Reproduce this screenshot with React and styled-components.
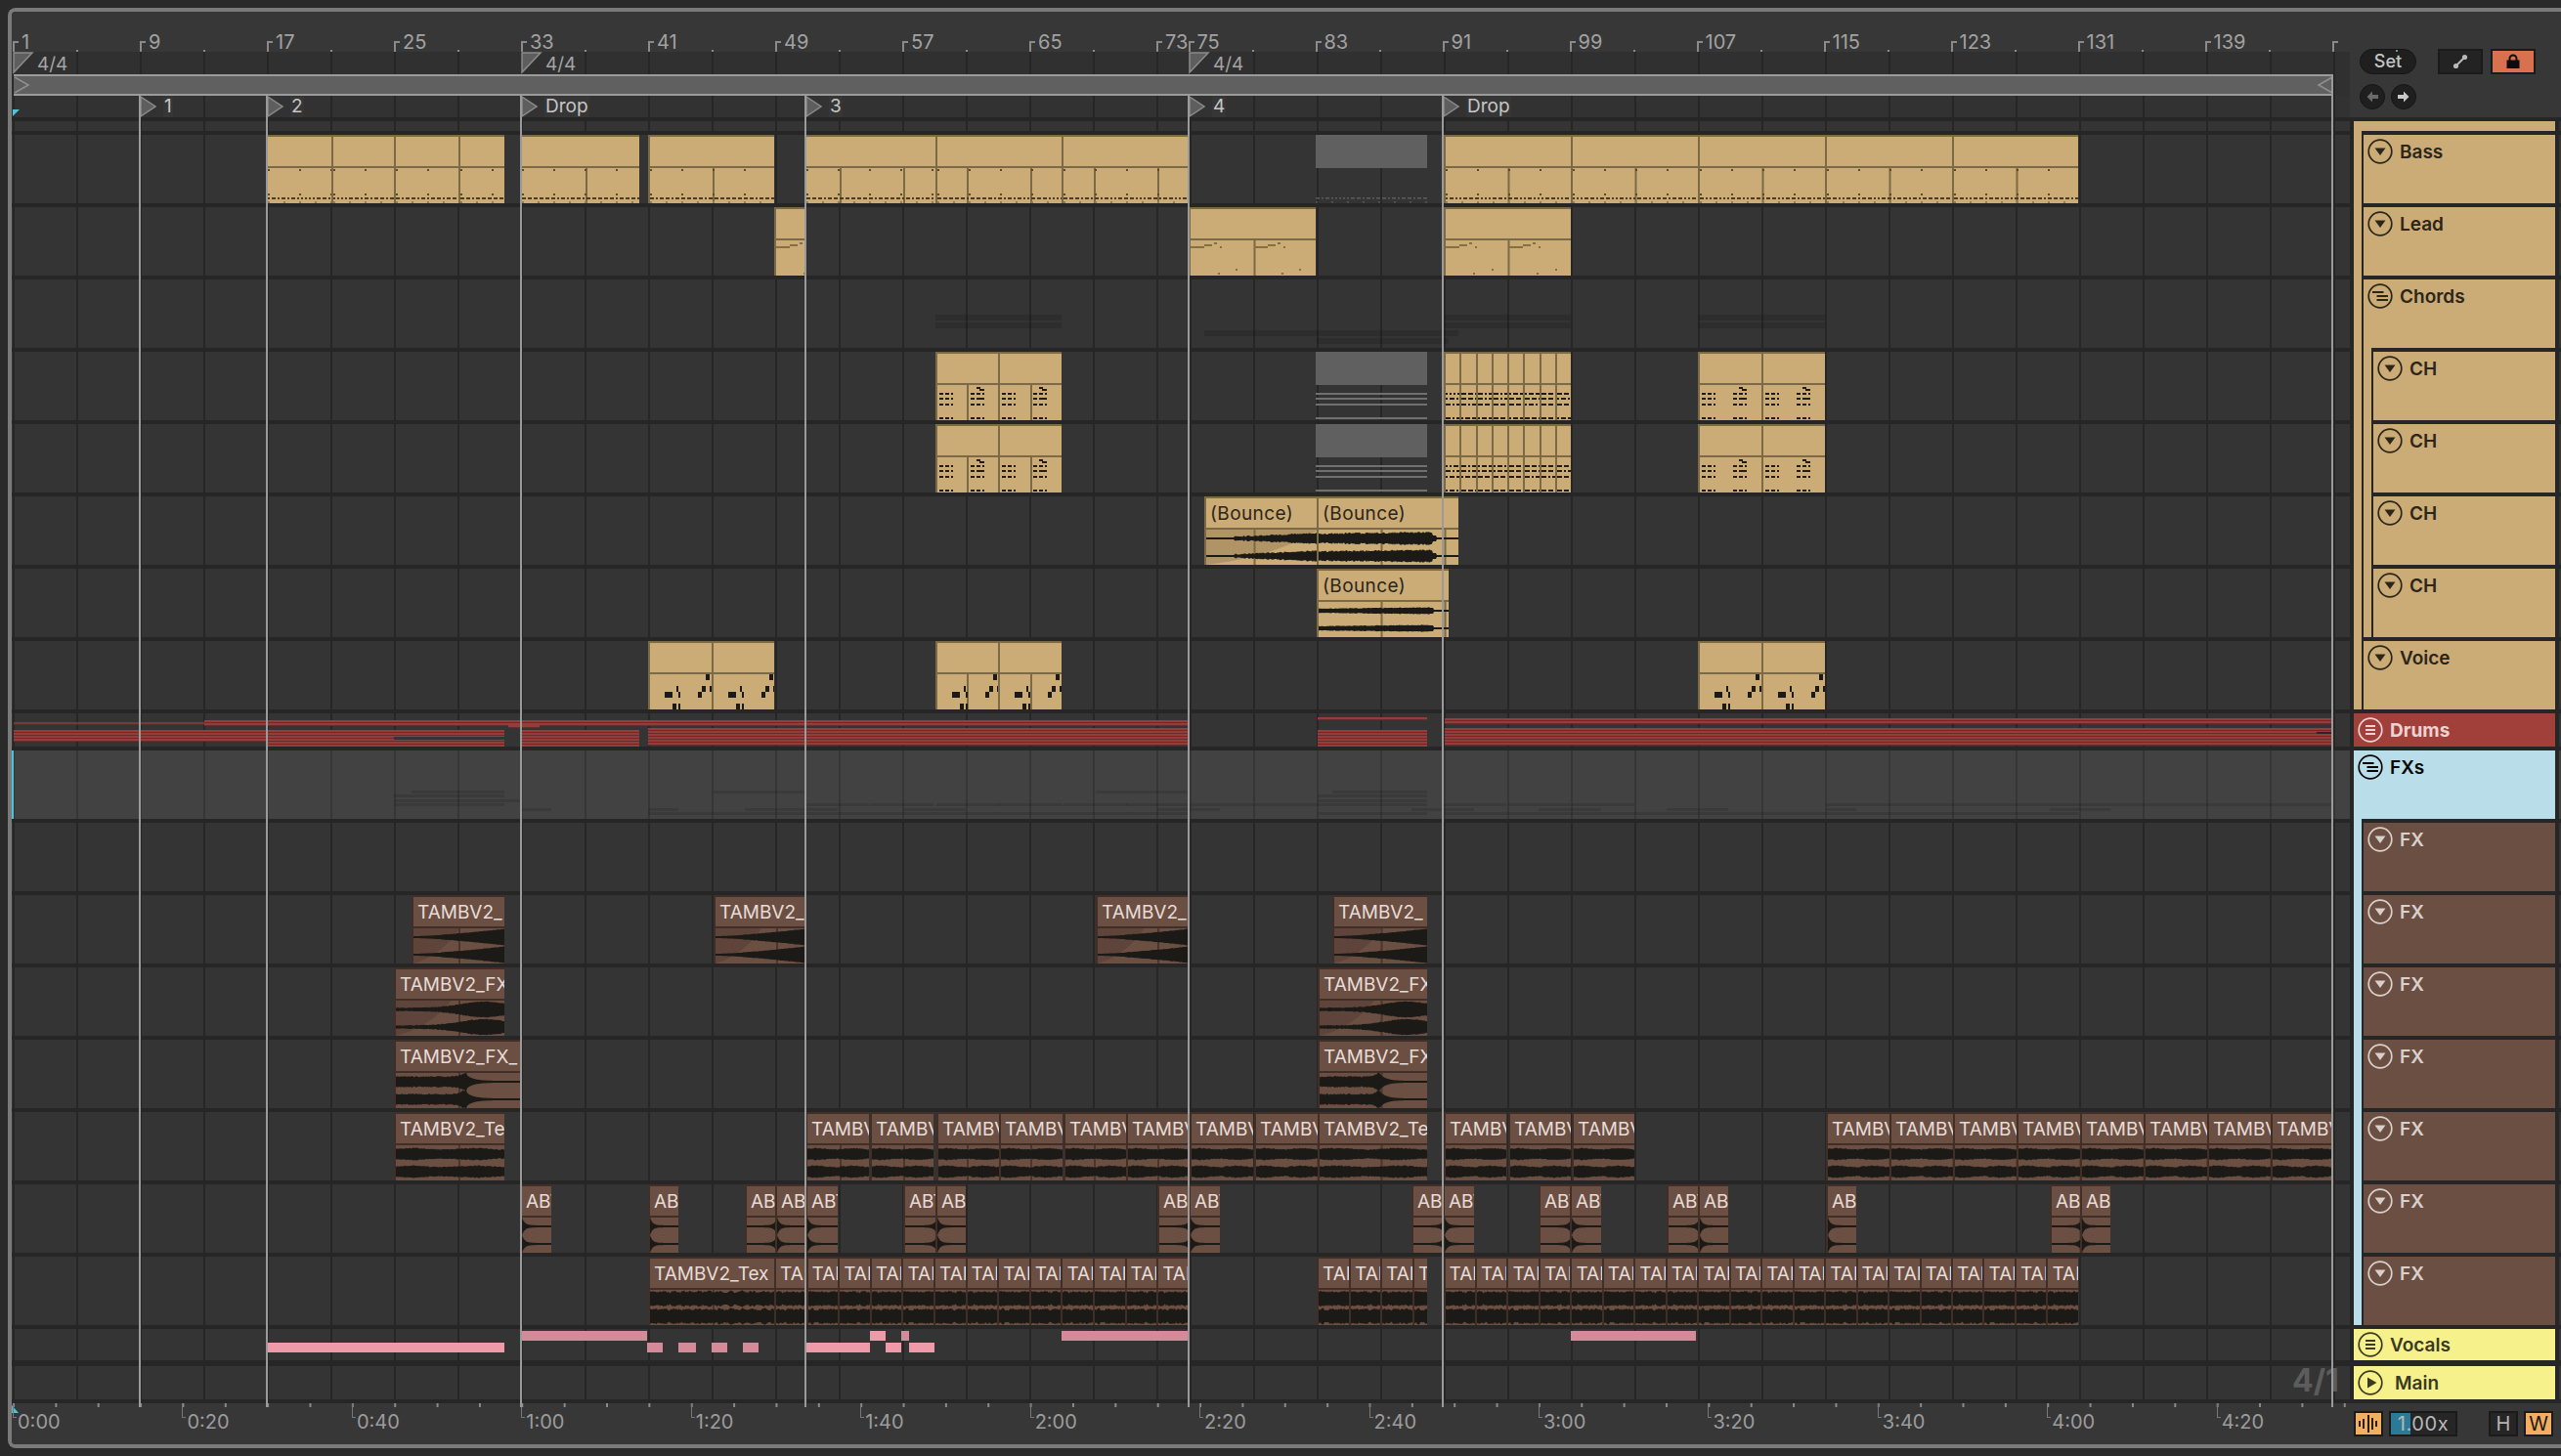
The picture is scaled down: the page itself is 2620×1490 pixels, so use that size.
import React from "react";
import styled, { createGlobalStyle, css } from "styled-components";

const FONT = `"Inter", "Liberation Sans", sans-serif`;
const TAN = "#cbab76";
const BROWN = "#6c4f43";
const BLUE = "#b9dde9";
const DARK = "#262626";
const LANE_LEFT = 12;

const GlobalStyle = createGlobalStyle`
  html, body { margin: 0; background: #2a2a2a; overflow: hidden; }
  * { box-sizing: border-box; }
`;

const grid = css`
  position: relative;
  &::before, &::after {
    content: "";
    position: absolute;
    top: 0;
    bottom: 0;
    pointer-events: none;
    background-image: linear-gradient(90deg, ${(p) => p.$line || DARK} 2px, transparent 2px);
    background-size: 65px 100%;
    background-repeat: repeat-x;
  }
  &::before { left: 0; width: 1204.5px; background-position: 1px 0; }
  &::after { left: 1204.5px; right: 0; background-position: 0 0; }
`;

const Page = styled.div`
  width: 2620px;
  height: 1490px;
  padding: 8px 0 0 8px;
  font-family: ${FONT};
`;
const Frame = styled.div`
  position: relative;
  width: 2612px;
  height: 1474px;
  border: 4px solid #7a7a7a;
  border-right: 0;
  border-radius: 8px 0 0 8px;
  background: ${DARK};
  overflow: hidden;
`;
const TopRow = styled.div`
  display: flex;
  height: 108px;
  background: #373737;
`;
const Head = styled.div`
  width: 2392px;
  display: flex;
  flex-direction: column;
`;
const BeatRuler = styled.div`
  display: flex;
  height: 41px;
  padding-left: 1px;
`;
const BeatCell = styled.div`
  position: relative;
  flex: none;
  width: ${(p) => p.$w}px;
  padding: 21px 0 0 9px;
  font-size: 20px;
  line-height: 20px;
  color: #a2a2a2;
  &::before {
    content: "";
    position: absolute;
    left: 0;
    top: 30px;
    width: 4px;
    height: 11px;
    border-left: 2px solid #8a8a8a;
    border-top: 2px solid #8a8a8a;
  }
  &::after {
    content: "";
    display: ${(p) => (p.$short ? "none" : "block")};
    position: absolute;
    left: 50%;
    bottom: 0;
    width: 2px;
    height: 2px;
    background: #8a8a8a;
  }
`;
const SigStrip = styled.div`
  ${grid}
  height: 23px;
  background: #303030;
`;
const SigMark = styled.div`
  position: absolute;
  top: 0;
  display: flex;
  z-index: 1;
  font-size: 19px;
  line-height: 21px;
  color: #a4a4a4;
  gap: 3px;
  svg { display: block; }
  span { padding-top: 2px; }
`;
const LoopRow = styled.div`
  ${grid}
  height: 22px;
  background: #303030;
  padding-left: 2px;
`;
const LoopBar = styled.div`
  position: relative;
  z-index: 1;
  width: 2373px;
  height: 22px;
  background: #606060;
  border-top: 2px solid #9b9b9b;
  border-bottom: 2px solid #9b9b9b;
  display: flex;
  justify-content: space-between;
  align-items: center;
`;
const FlagStrip = styled.div`
  ${grid}
  height: 22px;
  background: #323232;
`;
const Flag = styled.div`
  position: absolute;
  top: 0;
  z-index: 1;
  display: flex;
  gap: 6px;
  font-size: 19px;
  line-height: 22px;
  color: #c6c6c6;
  svg { display: block; }
  span { padding: 0 1px; background: #363636; }
`;
const PlayStart = styled.div`
  position: absolute;
  left: 1px;
  top: 14px;
  width: 7px;
  height: 7px;
  z-index: 2;
  background: #4fc3da;
  clip-path: polygon(0 0, 100% 0, 0 100%);
`;
const Controls = styled.div`
  flex: 1;
  padding: 38px 0 0 10px;
`;
const ControlRow = styled.div`
  display: flex;
  margin-bottom: 10px;
`;
const SetButton = styled.div`
  width: 58px;
  height: 26px;
  margin-right: 22px;
  border-radius: 13px;
  background: #1f1f1f;
  border: 1px solid #151515;
  color: #c4c4c4;
  font-size: 18px;
  font-weight: 500;
  line-height: 24px;
  text-align: center;
`;
const SquareToggle = styled.div`
  display: flex;
  align-items: center;
  justify-content: center;
  width: 46px;
  height: 26px;
  margin-right: 8px;
  border: 2px solid #1a1a1a;
  background: ${(p) => p.$bg || "#232323"};
`;
const RoundButton = styled.div`
  display: flex;
  align-items: center;
  justify-content: center;
  width: 26px;
  height: 26px;
  margin-right: 6px;
  border-radius: 50%;
  background: #1f1f1f;
  border: 1px solid #151515;
  color: ${(p) => p.$c};
`;
const Tracks = styled.div`
  padding-top: 4px;
`;
const Row = styled.div`
  display: flex;
  height: ${(p) => p.$h + p.$sep}px;
`;
const Lane = styled.div`
  ${grid}
  flex: none;
  width: 2392px;
  height: ${(p) => p.$h}px;
  background: ${(p) => p.$bg || "#343434"};
`;
const Tail = styled.div`
  width: 2px;
  margin-left: 4px;
  height: ${(p) => p.$h}px;
  background: ${(p) => p.$bg || "#343434"};
`;
const HeadCell = styled.div`
  flex: none;
  width: 206px;
  margin-left: 4px;
  display: flex;
`;
const Strip = styled.div`
  flex: none;
  width: 8px;
  background: ${(p) => p.$c};
  margin-bottom: ${(p) => (p.$end ? p.$sep : 0)}px;
`;
const StripLine = styled.div`
  flex: none;
  width: 2px;
  background: ${DARK};
`;
const HeadBody = styled.div`
  flex: 1;
  display: flex;
  flex-direction: column;
  background: ${(p) => p.$c};
`;
const HeadTitle = styled.div`
  flex: 1;
  display: flex;
  align-items: ${(p) => (p.$slim ? "center" : "flex-start")};
  gap: ${(p) => p.$gap || 7}px;
  padding: ${(p) => (p.$slim ? 0 : 4)}px 0 0 4px;
  font-size: 19px;
  font-weight: ${(p) => p.$weight || 600};
  line-height: 26px;
  color: ${(p) => p.$ink};
  svg { display: block; flex: none; }
`;
const HeadLabel = styled.span`
  padding-top: 1px;
`;
const HeadSep = styled.div`
  height: ${(p) => p.$sep}px;
  margin-left: ${(p) => p.$inset || 0}px;
  background: ${DARK};
`;
const ClipBox = styled.div`
  position: absolute;
  top: 0;
  height: 100%;
  z-index: 1;
  overflow: hidden;
  display: flex;
  flex-direction: column;
`;
const tones = {
  tan: { bg: TAN, edge: "#7b6a45", ink: "#2c2619" },
  brown: { bg: BROWN, edge: "#402e27", ink: "#e6dcd6" },
};
const ClipTitle = styled.div`
  flex: none;
  height: 34px;
  padding-left: 4px;
  white-space: nowrap;
  overflow: hidden;
  font-size: 19px;
  line-height: 31px;
  letter-spacing: ${(p) => (p.$tone === "tan" ? "0.4px" : "0")};
  background: ${(p) => (p.$ghost ? "#606060" : tones[p.$tone].bg)};
  color: ${(p) => tones[p.$tone].ink};
  ${(p) =>
    !p.$ghost &&
    css`
      border-top: 2px solid ${tones[p.$tone].edge};
      border-left: 2px solid ${tones[p.$tone].edge};
      border-bottom: 2px solid ${tones[p.$tone].edge};
    `}
`;
const ClipBody = styled.div`
  flex: 1;
  background: ${(p) => (p.$ghost ? "transparent" : tones[p.$tone].bg)};
  ${(p) => !p.$ghost && css`border-left: 2px solid ${tones[p.$tone].edge};`}
  svg { display: block; }
`;
const GhostLine = styled.div`
  position: absolute;
  z-index: 1;
  height: ${(p) => p.$h}px;
  background: rgba(0, 0, 0, ${(p) => p.$a});
`;
const VocalNote = styled.div`
  position: absolute;
  z-index: 1;
  height: 10px;
  top: ${(p) => (p.$high ? 2 : 14)}px;
  background: ${(p) => (p.$dim ? "#d58a99" : "#ef9aa9")};
`;
const DrumArt = styled.svg`
  position: absolute;
  left: 0;
  top: 0;
  z-index: 1;
`;
const SelectionEdge = styled.div`
  position: absolute;
  left: 0;
  top: 0;
  width: 2px;
  height: 100%;
  z-index: 2;
  background: #4fc3da;
`;
const LocatorLine = styled.div`
  position: absolute;
  top: ${(p) => (p.$end ? 64 : 86)}px;
  bottom: 38px;
  width: 2px;
  z-index: 3;
  background: #9a9a9a;
`;
const GridLabel = styled.div`
  position: absolute;
  left: 2333px;
  top: 1383px;
  z-index: 2;
  font-size: 32px;
  font-weight: 700;
  line-height: 36px;
  color: #5c5c5c;
`;
const BottomRow = styled.div`
  display: flex;
  height: 42px;
  background: #373737;
`;
const TimeRuler = styled.div`
  position: relative;
  flex: none;
  width: 2392px;
  display: flex;
  padding-left: 1px;
  overflow: hidden;
  background-image: linear-gradient(90deg, #8a8a8a 2px, transparent 2px);
  background-size: 43.37px 4px;
  background-repeat: repeat-x;
  background-position: 1px 0;
`;
const TimeCell = styled.div`
  position: relative;
  flex: none;
  width: 173.45px;
  padding: 6px 0 0 5px;
  font-size: 20px;
  line-height: 26px;
  color: #9c9c9c;
  &::before {
    content: "";
    position: absolute;
    left: 0;
    top: 0;
    width: 3px;
    height: 14px;
    border-left: 1.5px solid #777;
    border-bottom: 1.5px solid #777;
  }
`;
const TimeStart = styled.div`
  position: absolute;
  left: 0;
  top: 2px;
  width: 7px;
  height: 8px;
  background: #4fc3da;
  clip-path: polygon(0 0, 100% 100%, 0 100%);
`;
const BottomTools = styled.div`
  flex: 1;
  display: flex;
  padding: 8px 0 0 4px;
`;
const ToolButton = styled.div`
  display: flex;
  align-items: center;
  justify-content: center;
  flex: none;
  width: ${(p) => p.$w || 30}px;
  height: 26px;
  margin-right: ${(p) => p.$mr || 0}px;
  border: 2px solid #1a1a1a;
  background: ${(p) => p.$bg || "#262626"};
  color: ${(p) => p.$ink || "#b4b4b4"};
  font-size: 20px;
  line-height: 22px;
`;
const ZoomBox = styled.div`
  position: relative;
  width: 70px;
  height: 26px;
  margin-right: 32px;
  border: 2px solid #1a1a1a;
  background: #262626;
  color: #b8b8b8;
  font-size: 20px;
  line-height: 22px;
  letter-spacing: 0.6px;
  text-align: center;
  span { position: relative; }
`;
const ZoomFill = styled.div`
  position: absolute;
  left: 0;
  top: 0;
  bottom: 0;
  width: 20px;
  background: #2c7a96;
`;

// small seeded noise so the wave forms stay the same on every load
const noise = (n) => {
  const v = Math.sin(n * 127.1 + 311.7) * 43758.5453;
  return v - Math.floor(v);
};

const wavePath = (w, amp, seed) => {
  let d = "";
  [9, 27].forEach((cy, ch) => {
    const top = [];
    const bottom = [];
    for (let x = 0; x <= w; x += 1) {
      const a = amp(x / w, x, noise(x * 0.37 + seed + ch * 9));
      top.push(`${x},${(cy - a).toFixed(1)}`);
      bottom.unshift(`${x},${(cy + a).toFixed(1)}`);
    }
    d += `M${top.join(" L")} L${bottom.join(" L")} Z `;
  });
  return d;
};

const envelopes = {
  rise: (t, x, n) => 1 + Math.pow(t, 1.5) * 7.5 + (t > 0.3 ? n * 0.5 : 0),
  swell: (t, x, n) => 1.2 + Math.exp(-Math.pow((t - 0.8) / 0.3, 2)) * 6.4 + n * 0.9,
  fall: (t, x, n) =>
    t < 0.56
      ? 4.6 + Math.exp(-Math.pow((t - 0.55) / 0.05, 2)) * 3.5 + n * 1.4
      : 1 + 6 * Math.exp(-(t - 0.56) * 18),
  tex: (t, x, n) => 4.8 + Math.sin(t * 11) * 0.7 + n * 1.1,
  abFall: (t) => 1.1 + 8 * Math.exp(-t * 12),
  abRise: (t) => 1.1 + 8 * Math.exp(-(1 - t) * 12),
  dense: (t, x, n) => 6 + Math.sin(x * 0.55) * 0.6 + n * 2.2,
  bounceIn: (t, x, n) => (t < 0.25 ? 1 : 1 + (t - 0.25) * 5 + n * 1.4),
  bounceLoud: (t, x, n) => (t > 0.8 ? (t > 0.83 ? 1 : 3) : 3.8 + t * 2 + n * 1.8),
  bounceSoft: (t, x, n) => (t > 0.84 ? (t > 0.87 ? 1 : 3) : 1.8 + t * 1.5 + n * 0.7),
};

const gridXs = (x, w) => {
  const xs = [];
  for (let k = 0; k < 40; k += 1) {
    const gx = k < 19 ? 13 + 65 * k : 1216.5 + 65 * (k - 19);
    if (gx > x + 3 && gx < x + w - 1) xs.push(gx - x);
  }
  return xs;
};

const dashes = (w, y, h, seed, fill, on = 5, off = 2) => {
  const out = [];
  let x = 0;
  let i = 0;
  while (x < w) {
    const len = noise(seed + i) > 0.7 ? 2 : on;
    out.push(<rect key={`${y}-${i}`} x={x} y={y} width={len} height={h} fill={fill} />);
    x += len + off;
    i += 1;
  }
  return out;
};

const bassNotes = (w, seed) => [
  ...dashes(w, 30, 2, seed, "#4a3d22", 4, 2),
  ...dashes(w, 34, 2, seed + 5, "#8f7b50", 2, 14),
  ...dashes(w, 1, 2, seed + 9, "#5a4b2c", 2, 30),
  ...dashes(w, 26, 2, seed + 13, "#5a4b2c", 2, 30),
];
const leadNotes = (w, seed) => {
  const out = [];
  for (let x = 0; x < w; x += 65) {
    out.push(
      <rect key={`a${x}`} x={x} y={6} width={14} height={2} fill="#85703f" />,
      <rect key={`b${x}`} x={x + 14} y={4} width={8} height={2} fill="#85703f" />,
      <rect key={`c${x}`} x={x + 24} y={2} width={3} height={2} fill="#85703f" />,
      <rect key={`d${x}`} x={x + 30} y={6} width={2} height={2} fill="#85703f" />,
      <rect key={`e${x}`} x={x + 28} y={33} width={2} height={2} fill="#85703f" />,
      <rect key={`f${x}`} x={x + 45 + (seed % 5)} y={29} width={2} height={2} fill="#85703f" />,
    );
  }
  return out;
};
const NOTE = "#201c14";
const chordNotes = (w) => {
  const out = [];
  for (let x = 0; x < w; x += 32) {
    const full = Math.floor(x / 32) % 2 === 1;
    [8, 13, 19, 33].forEach((y) => {
      [[2, 4], [8, 4], [14, 2]].forEach(([dx, len], i) => {
        out.push(<rect key={`${x}-${y}-${i}`} x={x + dx} y={y} width={len} height={2} fill={NOTE} />);
      });
    });
    if (full) {
      out.push(
        <rect key={`t${x}`} x={x + 8} y={2} width={4} height={2} fill={NOTE} />,
        <rect key={`u${x}`} x={x + 11} y={4} width={5} height={2} fill={NOTE} />,
        <rect key={`v${x}`} x={x + 8} y={13} width={8} height={2} fill={NOTE} />,
      );
    }
  }
  return out;
};
const denseChordNotes = (w, seed) =>
  [8, 13, 19, 33].flatMap((y) => dashes(w, y, 2, seed + y, NOTE, 5, 2));
const voiceNotes = (w) => {
  const blocks = [
    [15, 18, 8, 6], [27, 12, 2, 6], [29, 18, 2, 6], [23, 30, 4, 6], [29, 30, 2, 6],
    [49, 18, 4, 6], [53, 12, 4, 6], [57, 0, 4, 6], [61, 12, 4, 6],
  ];
  const out = [];
  for (let x = 0; x < w; x += 65) {
    blocks.forEach(([bx, y, bw, h], i) => {
      out.push(<rect key={`${x}-${i}`} x={x + bx} y={y} width={bw} height={h} fill="#1c1a17" />);
    });
  }
  return out;
};
const ghostChord = (w) =>
  [8, 13, 19, 33].map((y) => <rect key={y} x={0} y={y} width={w} height={2} fill="#707070" />);

const ClipArt = ({ x, w, tone, ghost, wave, seed = 1, fade, notes }) => {
  const gridFill = ghost ? "transparent" : tone === "tan" ? "#7b6a45" : "#4a362e";
  return (
    <svg width={w} height={36} viewBox={`0 0 ${w} 36`}>
      {fade && (
        <path
          d={`M0,0 H${w * fade} Q${w * fade * 0.6},28 0,36 Z`}
          fill="rgba(0,0,0,0.13)"
        />
      )}
      {gridXs(x, w).map((g) => (
        <rect key={g} x={g - 1} y={0} width={2} height={36} fill={gridFill} />
      ))}
      {notes}
      {wave && <path d={wavePath(w, envelopes[wave], seed)} fill="#1c1a17" />}
    </svg>
  );
};

const Clip = ({ x, w, tone = "tan", title, ghost, ...art }) => (
  <ClipBox style={{ left: x - LANE_LEFT, width: w }}>
    <ClipTitle $tone={tone} $ghost={ghost}>
      {/* only what fits in the clip's width, the rest is cut by the clip */}
      {title && title.slice(0, Math.ceil((w - 6) / 12.5))}
    </ClipTitle>
    <ClipBody $tone={tone} $ghost={ghost}>
      <ClipArt x={x} w={w} tone={tone} ghost={ghost} {...art} />
    </ClipBody>
  </ClipBox>
);

const PanelIcon = ({ kind, color }) => (
  <svg width="26" height="26" viewBox="0 0 26 26">
    <circle cx="13" cy="13" r="11.8" fill="none" stroke={color} strokeWidth="1.7" />
    {kind === "down" && <polygon points="7.5,9.5 18.5,9.5 13,17" fill={color} />}
    {kind === "menu" && <path d="M8 9H18M8 13H18M8 17H18" stroke={color} strokeWidth="2" />}
    {kind === "stagger" && <path d="M5 9H16.5M9.5 13H21M9.5 17H21" stroke={color} strokeWidth="2" />}
    {kind === "play" && <polygon points="10,7.5 19.5,13 10,18.5" fill={color} />}
  </svg>
);

const TrackHead = ({ title, icon, c, ink, strips = [], sep = 4, inset, slim, gap, weight }) => (
  <HeadCell>
    {strips.map((s, i) => (
      <React.Fragment key={i}>
        <Strip $c={s.c} $end={s.end} $sep={sep} />
        <StripLine />
      </React.Fragment>
    ))}
    <HeadBody $c={c}>
      <HeadTitle $slim={slim} $ink={ink} $gap={gap} $weight={weight}>
        {icon && <PanelIcon kind={icon} color={ink} />}
        {title && <HeadLabel>{title}</HeadLabel>}
      </HeadTitle>
      <HeadSep $sep={sep} $inset={inset} />
    </HeadBody>
  </HeadCell>
);

const Track = ({ h = 70, sep = 4, bg, line, head, children }) => (
  <Row $h={h} $sep={sep}>
    <Lane $h={h} $bg={bg} $line={line}>
      {children}
    </Lane>
    {head}
    <Tail $h={h} $bg={bg} />
  </Row>
);

const span = (x, w) => ({ x, w });
const bassClips = [
  span(272, 67), span(339, 64), span(403, 66), span(469, 47), span(532, 122), span(663, 129),
  span(823, 134), span(957, 129), span(1086, 130.5), span(1477, 130), span(1607, 130),
  span(1737, 130), span(1867, 130), span(1997, 129),
];
const chordPairs = [span(957, 64), span(1021, 65), span(1737, 65), span(1802, 65)];
const fastChords = Array.from({ length: 8 }, (_, i) => span(1477 + i * 16.25, 16.25));
const voiceClips = [span(663, 65), span(728, 64), span(957, 64), span(1021, 65), span(1737, 65), span(1802, 65)];

const fx2 = [span(421, 95), span(730, 94), span(1121, 95), span(1363, 97)];
const fx5 = [
  ...[824, 890, 958, 1022, 1088, 1152, 1217, 1283].map((x) => span(x, 65)),
  ...[1477, 1543, 1608].map((x) => span(x, 64)),
  ...Array.from({ length: 8 }, (_, i) => span(1868 + i * 65, i === 7 ? 63 : 65)),
];
const abClips = [
  [532, 32, "abFall"], [663, 31, "abFall"], [762, 31, "abRise"], [793, 31, "abFall"],
  [824, 33, "abFall"], [924, 33, "abRise"], [957, 31, "abFall"], [1184, 32, "abRise"],
  [1216, 32, "abFall"], [1444, 32, "abRise"], [1476, 32, "abFall"], [1574, 32, "abRise"],
  [1606, 32, "abFall"], [1705, 32, "abRise"], [1737, 31, "abFall"], [1868, 31, "abFall"],
  [2097, 31, "abRise"], [2128, 31, "abFall"],
];
const texClips = [
  span(663, 129),
  ...Array.from({ length: 13 }, (_, i) => span(792 + i * 32.6, 32.6)),
  ...[1347, 1380, 1412, 1445].map((x) => span(x, x === 1445 ? 15 : 32.5)),
  ...Array.from({ length: 20 }, (_, i) => span(1476.5 + i * 32.47, 32.47)),
];
const vocals = [
  [273, 243], [533, 129, 1, 1], [662, 16, 0, 1], [694, 18, 0, 1], [728, 16, 0, 1], [760, 16, 0, 1],
  [825, 65], [890, 16, 1], [906, 16], [922, 8, 1, 1], [930, 26], [1086, 130, 1, 1], [1607, 128, 1, 1],
];

const chordGhosts = [
  [957, 129, 36], [957, 129, 44], [1232, 260, 52], [1347, 135, 60], [1478, 129, 36], [1478, 129, 44],
  [1737, 130, 36], [1737, 130, 44],
];
const fxGhosts = [
  ...fx2.map((c) => [c.x, c.w, 41]),
  [403, 113, 45], [1348, 112, 45], [403, 129, 50], [1348, 112, 50],
  ...fx5.map((c) => [c.x, c.w, 54]),
  [403, 113, 54], [1348, 112, 54],
  ...abClips.map(([x, w]) => [x, w, 59]),
  [663, 553, 63], [1348, 112, 63], [1477, 649, 63],
];

const drumBands = [
  [14, 195, 739, 2, 0.7], [209, 1007, 737, 4, 1], [520, 32, 742, 3, 1], [1348, 112, 734, 2, 1],
  [1478, 908, 735, 6, 1], [14, 260, 747, 12, 1], [274, 242, 747, 16, 1], [533, 121, 747, 16, 1],
  [663, 553, 745, 18, 1], [1348, 112, 747, 16, 1], [1478, 908, 745, 18, 1],
];

const Drums = () => {
  const bars = [];
  drumBands.forEach(([x, w, y, h, o], i) => {
    for (let dy = 0; dy < h; dy += 3) {
      bars.push(
        <rect key={`${i}-${dy}`} x={x - LANE_LEFT} y={y - 730 + dy} width={w} height={2} fill="#983c3a" opacity={o} />,
        <rect key={`${i}-${dy}b`} x={x - LANE_LEFT} y={y - 730 + dy + 2} width={w} height={1} fill="#632e2c" opacity={o} />,
      );
    }
  });
  return (
    <DrumArt width="2392" height="34" viewBox="0 0 2392 34">
      {bars}
      <rect x={403 - LANE_LEFT} y={24} width={113} height={3} fill="#343434" />
      <rect x={2370 - LANE_LEFT} y={19} width={16} height={2} fill="#262626" />
    </DrumArt>
  );
};

const tanGroup = { c: TAN };

const beats = [1, 9, 17, 25, 33, 41, 49, 57, 65, 73, 75, 83, 91, 99, 107, 115, 123, 131, 139, 147];
const times = ["0:00", "0:20", "0:40", "1:00", "1:20", "1:40", "2:00", "2:20", "2:40", "3:00", "3:20", "3:40", "4:00", "4:20"];
const locators = [
  [143, "1"], [273, "2"], [533, "Drop"], [824, "3"], [1216, "4"], [1476, "Drop"],
];

const App = () => (
  <Page>
    <GlobalStyle />
    <Frame>
      <TopRow>
        <Head>
          <BeatRuler>
            {beats.map((b) => (
              <BeatCell key={b} $w={b === 73 ? 32.5 : 130} $short={b === 73}>
                {b === 147 ? "" : b}
              </BeatCell>
            ))}
          </BeatRuler>
          <SigStrip>
            {[13, 533, 1216].map((x) => (
              <SigMark key={x} style={{ left: x - LANE_LEFT }}>
                <svg width="22" height="23" viewBox="0 0 22 23">
                  <path d="M1 1H20L1 21Z" fill="#5e5e5e" stroke="#8b8b8b" strokeWidth="1.5" />
                </svg>
                <span>4/4</span>
              </SigMark>
            ))}
          </SigStrip>
          <LoopRow>
            <LoopBar>
              <svg width="18" height="18" viewBox="0 0 18 18">
                <path d="M1 1L15 9L1 17" fill="none" stroke="#8e8e8e" strokeWidth="1.6" />
              </svg>
              <svg width="18" height="18" viewBox="0 0 18 18">
                <path d="M17 1L3 9L17 17" fill="none" stroke="#8e8e8e" strokeWidth="1.6" />
              </svg>
            </LoopBar>
          </LoopRow>
          <FlagStrip>
            <PlayStart />
            {locators.map(([x, label], i) => (
              <Flag key={i} style={{ left: x - LANE_LEFT }}>
                <svg width="18" height="22" viewBox="0 0 18 22">
                  <path d="M1 1L16 11L1 21Z" fill="#5e5e5e" stroke="#8b8b8b" strokeWidth="1.5" />
                </svg>
                <span>{label}</span>
              </Flag>
            ))}
          </FlagStrip>
        </Head>
        <Controls>
          <ControlRow>
            <SetButton>Set</SetButton>
            <SquareToggle>
              <svg width="16" height="16" viewBox="0 0 16 16">
                <path d="M3.5 12.5L12.5 3.5" stroke="#b9b9b9" strokeWidth="2" />
                <circle cx="3.5" cy="12.5" r="2.6" fill="#b9b9b9" />
                <circle cx="12.5" cy="3.5" r="2.6" fill="#b9b9b9" />
              </svg>
            </SquareToggle>
            <SquareToggle $bg="#d9704e">
              <svg width="16" height="16" viewBox="0 0 16 16">
                <path d="M4.5 7V5A3.5 3.5 0 0 1 11.500 5V7" fill="none" stroke="#0c0c0c" strokeWidth="2" />
                <rect x="1.500" y="6.500" width="13" height="8.500" fill="#0c0c0c" />
              </svg>
            </SquareToggle>
          </ControlRow>
          <ControlRow>
            <RoundButton $c="#6a6a6a">
              <svg width="14" height="14" viewBox="0 0 14 14">
                <path d="M7 1.500L1.500 7L7 12.500V9H13V5H7Z" fill="currentColor" />
              </svg>
            </RoundButton>
            <RoundButton $c="#c9c9c9">
              <svg width="14" height="14" viewBox="0 0 14 14">
                <path d="M7 1.500L12.500 7L7 12.500V9H1V5H7Z" fill="currentColor" />
              </svg>
            </RoundButton>
          </ControlRow>
        </Controls>
      </TopRow>

      <Tracks>
        <Track h={10} head={<TrackHead c={TAN} ink="#2c2619" inset={8} />} />
        <Track
          head={<TrackHead c={TAN} ink="#2c2619" icon="down" title="Bass" strips={[tanGroup]} />}
        >
          {bassClips.map((c, i) => (
            <Clip key={i} {...c} notes={bassNotes(c.w, i * 7)} />
          ))}
          <Clip
            x={1346}
            w={114}
            ghost
            notes={[...dashes(114, 30, 1.6, 3, "#5a5a5a", 4, 2), ...dashes(114, 34, 1.6, 8, "#555", 2, 14)]}
          />
        </Track>
        <Track
          head={<TrackHead c={TAN} ink="#2c2619" icon="down" title="Lead" strips={[tanGroup]} />}
        >
          {[span(792, 32), span(1216, 130), span(1477, 130)].map((c, i) => (
            <Clip key={i} {...c} notes={leadNotes(c.w, i)} />
          ))}
        </Track>
        <Track
          head={
            <TrackHead c={TAN} ink="#2c2619" icon="stagger" title="Chords" strips={[tanGroup]} inset={8} />
          }
        >
          {chordGhosts.map(([x, w, top], i) => (
            <GhostLine key={i} $h={6} $a={0.13} style={{ left: x - LANE_LEFT, width: w, top }} />
          ))}
        </Track>
        {[0, 1].map((n) => (
          <Track
            key={n}
            head={
              <TrackHead c={TAN} ink="#2c2619" icon="down" title="CH" strips={[tanGroup, tanGroup]} />
            }
          >
            {chordPairs.map((c, i) => (
              <Clip key={i} {...c} notes={chordNotes(c.w)} />
            ))}
            <Clip x={1346} w={114} ghost notes={ghostChord(114)} />
            {fastChords.map((c, i) => (
              <Clip key={i} {...c} notes={denseChordNotes(c.w, i * 3 + n)} />
            ))}
          </Track>
        ))}
        <Track
          head={
            <TrackHead c={TAN} ink="#2c2619" icon="down" title="CH" strips={[tanGroup, tanGroup]} />
          }
        >
          <Clip x={1232} w={115} title="(Bounce)" wave="bounceIn" fade={1} seed={2} />
          <Clip x={1347} w={145} title="(Bounce)" wave="bounceLoud" seed={3} />
        </Track>
        <Track
          head={
            <TrackHead
              c={TAN}
              ink="#2c2619"
              icon="down"
              title="CH"
              strips={[tanGroup, { c: TAN, end: true }]}
            />
          }
        >
          <Clip x={1347} w={135} title="(Bounce)" wave="bounceSoft" seed={4} />
        </Track>
        <Track
          head={
            <TrackHead c={TAN} ink="#2c2619" icon="down" title="Voice" strips={[{ c: TAN, end: true }]} />
          }
        >
          {voiceClips.map((c, i) => (
            <Clip key={i} {...c} notes={voiceNotes(c.w)} />
          ))}
        </Track>

        <Track
          h={34}
          head={<TrackHead c="#a13f3b" ink="#ecd2d0" icon="menu" title="Drums" slim gap={7} weight={700} />}
        >
          <Drums />
        </Track>

        <Track
          bg="#424242"
          line="#363636"
          head={<TrackHead c={BLUE} ink="#060606" icon="stagger" title="FXs" inset={8} weight={600} />}
        >
          <SelectionEdge />
          {fxGhosts.map(([x, w, top], i) => (
            <GhostLine key={i} $h={3} $a={0.11} style={{ left: x - LANE_LEFT, width: w, top }} />
          ))}
        </Track>

        <Track head={<TrackHead c={BROWN} ink="#d9d0cb" icon="down" title="FX" strips={[{ c: BLUE }]} />} />
        <Track head={<TrackHead c={BROWN} ink="#d9d0cb" icon="down" title="FX" strips={[{ c: BLUE }]} />}>
          {fx2.map((c, i) => (
            <Clip key={i} {...c} tone="brown" title="TAMBV2_" wave="rise" fade={0.5} seed={i + 10} />
          ))}
        </Track>
        <Track head={<TrackHead c={BROWN} ink="#d9d0cb" icon="down" title="FX" strips={[{ c: BLUE }]} />}>
          <Clip x={403} w={113} tone="brown" title="TAMBV2_FX" wave="swell" fade={0.5} seed={14} />
          <Clip x={1348} w={112} tone="brown" title="TAMBV2_FX" wave="swell" fade={0.5} seed={15} />
        </Track>
        <Track head={<TrackHead c={BROWN} ink="#d9d0cb" icon="down" title="FX" strips={[{ c: BLUE }]} />}>
          <Clip x={403} w={129} tone="brown" title="TAMBV2_FX_" wave="fall" seed={16} />
          <Clip x={1348} w={112} tone="brown" title="TAMBV2_FX" wave="fall" seed={17} />
        </Track>
        <Track head={<TrackHead c={BROWN} ink="#d9d0cb" icon="down" title="FX" strips={[{ c: BLUE }]} />}>
          <Clip x={403} w={113} tone="brown" title="TAMBV2_Te" wave="tex" seed={18} />
          <Clip x={1348} w={112} tone="brown" title="TAMBV2_Te" wave="tex" seed={19} />
          {fx5.map((c, i) => (
            <Clip key={i} {...c} tone="brown" title="TAMBV2_Te" wave="tex" seed={20} />
          ))}
        </Track>
        <Track head={<TrackHead c={BROWN} ink="#d9d0cb" icon="down" title="FX" strips={[{ c: BLUE }]} />}>
          {abClips.map(([x, w, wave], i) => (
            <Clip key={i} x={x} w={w} tone="brown" title="ABT" wave={wave} seed={i} />
          ))}
        </Track>
        <Track
          head={
            <TrackHead c={BROWN} ink="#d9d0cb" icon="down" title="FX" strips={[{ c: BLUE, end: true }]} />
          }
        >
          {texClips.map((c, i) => (
            <Clip key={i} {...c} tone="brown" title="TAMBV2_Tex" wave="dense" seed={i % 3} />
          ))}
        </Track>

        <Track
          h={32}
          sep={6}
          head={<TrackHead c="#f6f18a" ink="#3a3a22" icon="menu" title="Vocals" slim sep={6} />}
        >
          {vocals.map(([x, w, high, dim], i) => (
            <VocalNote key={i} $high={high} $dim={dim} style={{ left: x - LANE_LEFT, width: w }} />
          ))}
        </Track>
        <Track
          h={34}
          head={<TrackHead c="#f6f18a" ink="#3a3a22" icon="play" title="Main" slim gap={12} />}
        />
      </Tracks>

      <BottomRow>
        <TimeRuler>
          <TimeStart />
          {times.map((t) => (
            <TimeCell key={t}>{t}</TimeCell>
          ))}
        </TimeRuler>
        <BottomTools>
          <ToolButton $bg="#f4ae62" $mr={6}>
            <svg width="22" height="18" viewBox="0 0 22 18">
              <path d="M2 6V12M6 4V14M11 0V18M15 3V15M19 6V12" stroke="#2a2012" strokeWidth="2" />
            </svg>
          </ToolButton>
          <ZoomBox>
            <ZoomFill />
            <span>1.00x</span>
          </ZoomBox>
          <ToolButton $mr={6}>H</ToolButton>
          <ToolButton $bg="#f4ae62" $ink="#1c1710">W</ToolButton>
        </BottomTools>
      </BottomRow>

      <GridLabel>4/1</GridLabel>
      {locators.map(([x], i) => (
        <LocatorLine key={i} style={{ left: x - LANE_LEFT - 1 }} />
      ))}
      <LocatorLine $end style={{ left: 2386 - LANE_LEFT - 1 }} />
    </Frame>
  </Page>
);

export default App;
